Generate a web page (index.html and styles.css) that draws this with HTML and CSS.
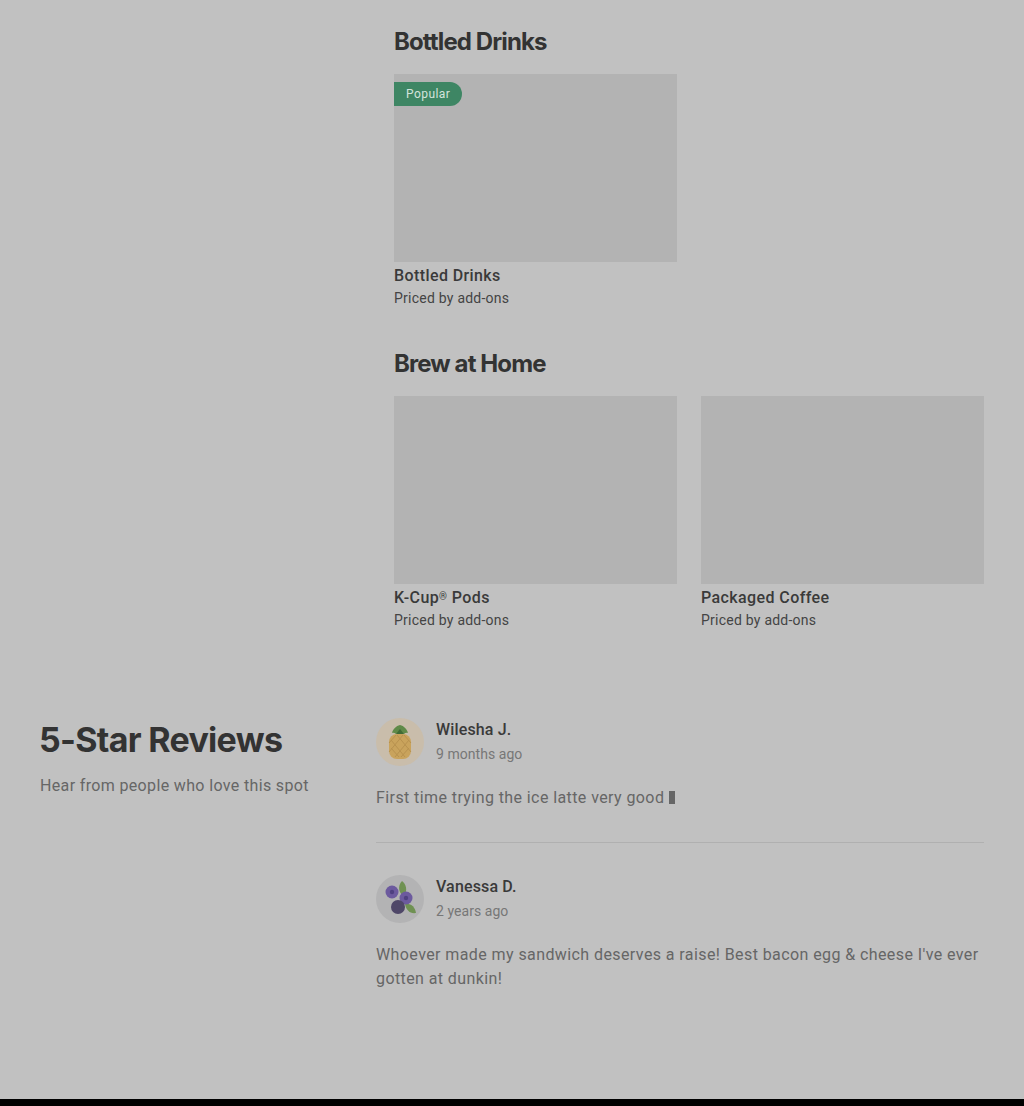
FILE: index.html
```html
<!DOCTYPE html>
<html lang="en">
<head>
<meta charset="utf-8">
<title>Menu</title>
<link rel="stylesheet" href="styles.css">
</head>
<body>
<main class="page">
  <div class="menu">
    <section class="category">
      <h2 class="category-title">Bottled Drinks</h2>
      <div class="grid">
        <article class="item">
          <div class="thumb"><span class="badge">Popular</span></div>
          <h3 class="item-name">Bottled Drinks</h3>
          <p class="item-price">Priced by add-ons</p>
        </article>
      </div>
    </section>
    <section class="category">
      <h2 class="category-title">Brew at Home</h2>
      <div class="grid">
        <article class="item">
          <div class="thumb"></div>
          <h3 class="item-name">K-Cup<span class="reg">®</span> Pods</h3>
          <p class="item-price">Priced by add-ons</p>
        </article>
        <article class="item">
          <div class="thumb"></div>
          <h3 class="item-name">Packaged Coffee</h3>
          <p class="item-price">Priced by add-ons</p>
        </article>
      </div>
    </section>
  </div>
  <section class="reviews">
    <div class="reviews-intro">
      <h2 class="reviews-title">5-Star Reviews</h2>
      <p class="reviews-sub">Hear from people who love this spot</p>
    </div>
    <div class="reviews-list">
      <article class="review">
        <header class="review-head">
          <svg class="avatar" viewBox="0 0 48 48" aria-hidden="true">
            <circle cx="24" cy="24" r="24" fill="#c9bdab"/>
            <path d="M24 7c-4 1-7 4-8 8 1.500-.5 3 0 4 1 1-.7 2.500-1 4-1s3 .3 4 1c1-1 2.500-1.500 4-1-1-4-4-7-8-8z" fill="#5f8a48"/>
            <path d="M24 11l-4 5h8z" fill="#3f6b36"/>
            <rect x="13" y="16" width="22" height="25" rx="8" fill="#c9a35c"/>
            <path d="M15 22l14 17M15 30l8 9M21 17l14 17M28 17l7 8M33 22L19 39M33 30l-8 9M27 17L13 34M20 17l-7 8" stroke="#b8924f" stroke-width="1" fill="none"/>
          </svg>
          <div class="review-meta">
            <div class="review-name">Wilesha J.</div>
            <div class="review-date">9 months ago</div>
          </div>
        </header>
        <p class="review-text">First time trying the ice latte very good <span class="glyph"></span></p>
      </article>
      <article class="review">
        <header class="review-head">
          <svg class="avatar" viewBox="0 0 48 48" aria-hidden="true">
            <circle cx="24" cy="24" r="24" fill="#b3b3b4"/>
            <path d="M26 6c4 3 6 9 2 15-5-2-7-10-2-15z" fill="#6f9152"/>
            <path d="M40 38c-6 1-10-3-11-9 6-1 10 3 11 9z" fill="#6f9152"/>
            <circle cx="16" cy="17" r="6.500" fill="#6c5a9e"/>
            <circle cx="16" cy="17" r="2.200" fill="#4f4180"/>
            <circle cx="30" cy="23" r="6.500" fill="#6c5a9e"/>
            <circle cx="30" cy="23" r="2.200" fill="#4f4180"/>
            <circle cx="22" cy="32" r="7" fill="#4f4768"/>
          </svg>
          <div class="review-meta">
            <div class="review-name">Vanessa D.</div>
            <div class="review-date">2 years ago</div>
          </div>
        </header>
        <p class="review-text">Whoever made my sandwich deserves a raise! Best bacon egg &amp; cheese I've ever gotten at dunkin!</p>
      </article>
    </div>
  </section>
</main>
<footer class="footer-bar"></footer>
</body>
</html>
```

FILE: styles.css
```css
* { box-sizing: border-box; }
html, body { margin: 0; padding: 0; }
body {
  background: #c1c1c1;
  color: #333;
  font-family: Roboto, "Liberation Sans", sans-serif;
  height: 1106px;
  overflow: hidden;
  display: flex;
  flex-direction: column;
}
.page { flex: 1; padding: 0 40px; }
.menu { margin-left: 354px; padding-top: 25px; }
.category { margin-bottom: 39px; }
.category-title {
  margin: 0 0 15px;
  font: 700 24px/34px Inter, sans-serif;
  letter-spacing: -0.9px;
  color: #333;
}
.grid { display: grid; grid-template-columns: 283px 283px; column-gap: 24px; }
.thumb { position: relative; height: 187.5px; background: #b3b3b3; }
.badge {
  position: absolute; left: 0; top: 8px;
  height: 24px; padding: 0 12px;
  background: #3e8664; color: #d4e4dc;
  font-size: 12px; line-height: 24px; letter-spacing: .45px;
  border-radius: 0 12px 12px 0;
}
.item-name { margin: 3.500px 0 0; font-size: 16px; font-weight: 500; line-height: 22px; letter-spacing: .4px; color: #3a3a3a; }
.reg { font-size: 10px; line-height: 0; vertical-align: 3px; }
.item-price { margin: 1px 0 0; font-size: 14px; line-height: 20px; letter-spacing: .24px; color: #444; }
.reviews { display: flex; margin-top: 86px; }
.reviews-intro { width: 336px; flex: none; }
.reviews-title {
  margin: 0 0 0 -1px;
  font: 700 34px/48px Inter, sans-serif;
  letter-spacing: -0.7px;
  color: #333;
}
.reviews-sub { margin: 10px 0 0; font-size: 16px; line-height: 24px; letter-spacing: .35px; color: #666; }
.reviews-list { flex: 1; padding-top: 2px; }
.review { padding-bottom: 32px; }
.review + .review { border-top: 1px solid #b0b0b0; padding-top: 32px; }
.review-head { display: flex; align-items: center; gap: 12px; }
.avatar { width: 48px; height: 48px; flex: none; }
.review-meta { margin-bottom: 2px; }
.review-name { font-size: 16px; font-weight: 500; line-height: 24px; letter-spacing: .15px; color: #3a3a3a; }
.review-date { font-size: 14px; line-height: 20px; letter-spacing: .05px; color: #777; margin-top: 2px; }
.review-text { margin: 20px 0 0; font-size: 16px; line-height: 24px; letter-spacing: .41px; color: #666; }
.glyph { display: inline-block; width: 6px; height: 13px; background: #666; vertical-align: -1px; }
.footer-bar { height: 7px; background: #000; flex: none; }
```
